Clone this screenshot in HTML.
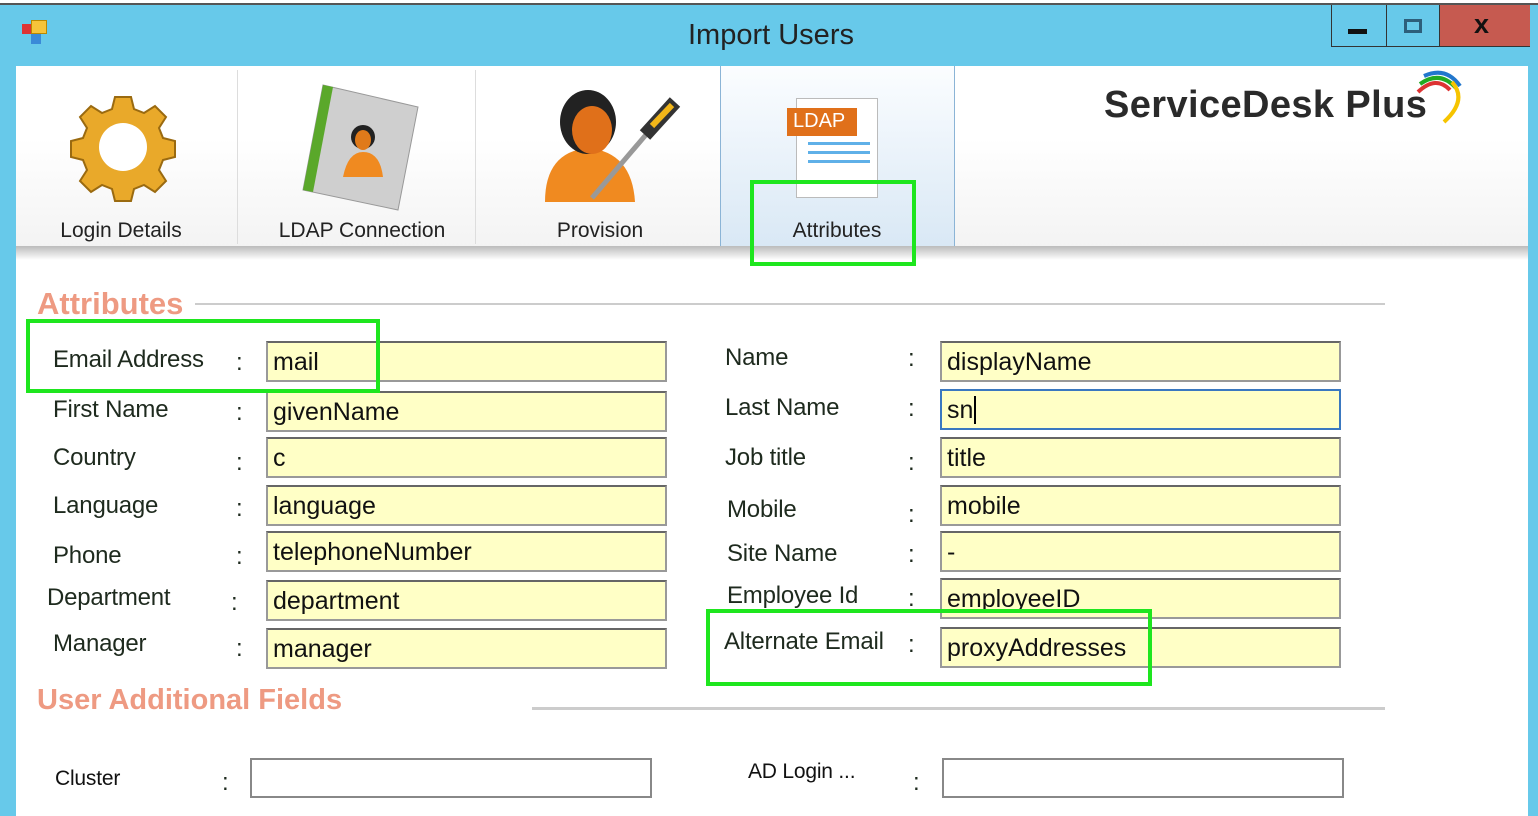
<!DOCTYPE html>
<html><head><meta charset="utf-8"><style>
*{margin:0;padding:0;box-sizing:border-box}
body{width:1538px;height:816px;overflow:hidden;background:#67c9ea;font-family:"Liberation Sans",sans-serif;position:relative}
.a{position:absolute}
.top{left:0;top:0;width:1538px;height:5px;background:#fff;border-bottom:2px solid #555}
.title{left:0;top:5px;width:1538px;height:60px;background:#67c9ea}
.tb{left:16px;top:66px;width:1512px;height:182px;background:linear-gradient(#fff,#fff 40%,#f3f3f3)}
.sep{top:70px;width:1px;height:174px;background:#ddd}
.shadow{left:16px;top:246px;width:1512px;height:14px;background:linear-gradient(#bbb,#fff)}
.form{left:16px;top:260px;width:1512px;height:556px;background:#fff}
.lbl{font-size:24px;color:#1e2a1e;letter-spacing:-0.2px}
.inp{width:401px;height:41px;background:#ffffc6;border:2px solid #999;border-top-color:#666;font-size:25px;color:#111;padding:5px 0 0 5px}
.tl{font-size:21px;color:#222;text-align:center;width:240px}
.gb{border:4px solid #1ee61e}
.hd{font-size:31px;font-weight:bold;color:#ee9a82}
</style></head><body>
<div class="a top"></div>
<div class="a title"></div>
<div class="a" style="left:22px;top:24px;width:10px;height:10px;background:#d33"></div>
<div class="a" style="left:31px;top:20px;width:16px;height:14px;background:#f6c43a;border:1px solid #b80"></div>
<div class="a" style="left:31px;top:34px;width:10px;height:10px;background:#3a8ad8"></div>
<div class="a" style="left:688px;top:19px;font-size:29px;color:#222">Import Users</div>
<div class="a" style="left:1331px;top:5px;width:56px;height:42px;border:1px solid #333;border-top:none;border-right:none"></div>
<div class="a" style="left:1348px;top:29px;width:19px;height:5px;background:#111"></div>
<div class="a" style="left:1386px;top:5px;width:54px;height:42px;border:1px solid #333;border-top:none"></div>
<div class="a" style="left:1404px;top:19px;width:18px;height:14px;border:3px solid #2d5e7a"></div>
<div class="a" style="left:1440px;top:5px;width:90px;height:42px;background:#c65a50;border-bottom:1px solid #333"></div>
<div class="a" style="left:1474px;top:9px;font-size:27px;font-weight:bold;color:#111">x</div>
<div class="a tb"></div>
<div class="a" style="left:720px;top:66px;width:235px;height:180px;background:linear-gradient(#fbfdff,#d9e8f5);border-left:1px solid #8bb4d6;border-right:1px solid #8bb4d6"></div>
<div class="a sep" style="left:237px"></div>
<div class="a sep" style="left:475px"></div>
<svg class="a" style="left:68px;top:92px" width="110" height="110" viewBox="0 0 110 110">
<g transform="translate(55,55)"><g fill="#e9a92a" stroke="#9a6a10" stroke-width="2">
<path d="M-8,-50h16l3,12 10,4 11,-7 11,11 -7,11 4,10 12,3v16l-12,3 -4,10 7,11 -11,11 -11,-7 -10,4 -3,12h-16l-3,-12 -10,-4 -11,7 -11,-11 7,-11 -4,-10 -12,-3v-16l12,-3 4,-10 -7,-11 11,-11 11,7 10,-4z"/></g>
<circle r="24" fill="#fff"/></g></svg>
<svg class="a" style="left:298px;top:82px" width="125" height="130" viewBox="0 0 125 130">
<path d="M25,3 L120,25 L100,128 L5,108Z" fill="#cfcfcf" stroke="#999"/>
<path d="M25,3 L35,5 L15,110 L5,108Z" fill="#5aa82a"/>
<circle cx="65" cy="55" r="12" fill="#222"/><ellipse cx="65" cy="58" rx="8" ry="10" fill="#e07a1a"/>
<path d="M45,95 Q50,70 65,70 Q82,70 85,95Z" fill="#f08a20"/></svg>
<svg class="a" style="left:540px;top:90px" width="145" height="115" viewBox="0 0 145 115">
<path d="M5,112 Q5,62 48,58 Q92,62 95,112Z" fill="#f08a20"/>
<ellipse cx="48" cy="32" rx="28" ry="32" fill="#222"/><ellipse cx="52" cy="40" rx="20" ry="24" fill="#e0701a"/>
<path d="M52,108 L110,40" stroke="#999" stroke-width="5"/><path d="M105,45 L135,12" stroke="#333" stroke-width="14"/><path d="M112,36 L132,15" stroke="#f2b619" stroke-width="6"/></svg>
<div class="a" style="left:796px;top:98px;width:82px;height:100px;background:#fff;border:1px solid #bbb"></div>
<div class="a" style="left:787px;top:108px;width:70px;height:28px;background:#e0701a;color:#fff;font-size:20px;padding:2px 0 0 6px">LDAP</div>
<div class="a" style="left:808px;top:142px;width:62px;height:26px;background:repeating-linear-gradient(#5fb0e8 0 3px,transparent 3px 9px)"></div>
<div class="a tl" style="left:1px;top:219px">Login Details</div>
<div class="a tl" style="left:242px;top:219px">LDAP Connection</div>
<div class="a tl" style="left:480px;top:219px">Provision</div>
<div class="a tl" style="left:717px;top:219px">Attributes</div>
<div class="a" style="left:1104px;top:84px;font-size:38px;color:#2a2a2a;font-weight:bold;letter-spacing:0.4px">ServiceDesk Plus</div>
<svg class="a" style="left:1408px;top:70px" width="60" height="56" viewBox="0 0 60 56"><g fill="none" stroke-width="4"><path d="M10,22 Q28,5 42,20" stroke="#d33"/><path d="M12,14 Q32,0 48,18" stroke="#2a2"/><path d="M16,6 Q38,-4 52,16" stroke="#27c"/><path d="M44,12 Q60,30 36,52" stroke="#f6c400"/></g></svg>
<div class="a shadow"></div>
<div class="a form"></div>
<div class="a gb" style="left:750px;top:180px;width:166px;height:86px"></div>
<div class="a hd" style="left:37px;top:286px">Attributes</div>
<div class="a" style="left:195px;top:303px;width:1190px;height:2px;background:#ccc"></div>
<div class="a hd" style="left:37px;top:684px;font-size:29px">User Additional Fields</div>
<div class="a" style="left:532px;top:707px;width:853px;height:3px;background:#ccc"></div>

<div class="a lbl" style="left:53px;top:346px">Email Address</div>
<div class="a lbl" style="left:53px;top:396px">First Name</div>
<div class="a lbl" style="left:53px;top:444px">Country</div>
<div class="a lbl" style="left:53px;top:492px">Language</div>
<div class="a lbl" style="left:53px;top:542px">Phone</div>
<div class="a lbl" style="left:47px;top:584px">Department</div>
<div class="a lbl" style="left:53px;top:630px">Manager</div>
<div class="a lbl" style="left:236px;top:349px">:</div><div class="a lbl" style="left:236px;top:399px">:</div><div class="a lbl" style="left:236px;top:449px">:</div><div class="a lbl" style="left:236px;top:495px">:</div><div class="a lbl" style="left:236px;top:543px">:</div><div class="a lbl" style="left:231px;top:589px">:</div><div class="a lbl" style="left:236px;top:635px">:</div>
<div class="a inp" style="left:266px;top:341px">mail</div>
<div class="a inp" style="left:266px;top:391px">givenName</div>
<div class="a inp" style="left:266px;top:437px">c</div>
<div class="a inp" style="left:266px;top:485px">language</div>
<div class="a inp" style="left:266px;top:531px">telephoneNumber</div>
<div class="a inp" style="left:266px;top:580px">department</div>
<div class="a inp" style="left:266px;top:628px">manager</div>

<div class="a lbl" style="left:725px;top:344px">Name</div>
<div class="a lbl" style="left:725px;top:394px">Last Name</div>
<div class="a lbl" style="left:725px;top:444px">Job title</div>
<div class="a lbl" style="left:727px;top:496px">Mobile</div>
<div class="a lbl" style="left:727px;top:540px">Site Name</div>
<div class="a lbl" style="left:727px;top:582px">Employee Id</div>
<div class="a lbl" style="left:724px;top:628px">Alternate Email</div>
<div class="a lbl" style="left:908px;top:345px">:</div><div class="a lbl" style="left:908px;top:395px">:</div><div class="a lbl" style="left:908px;top:449px">:</div><div class="a lbl" style="left:908px;top:501px">:</div><div class="a lbl" style="left:908px;top:541px">:</div><div class="a lbl" style="left:908px;top:585px">:</div><div class="a lbl" style="left:908px;top:631px">:</div>
<div class="a inp" style="left:940px;top:341px">displayName</div>
<div class="a inp" style="left:940px;top:389px;border-color:#3a78c0">sn<span style="border-left:2px solid #000;margin-left:1px"></span></div>
<div class="a inp" style="left:940px;top:437px">title</div>
<div class="a inp" style="left:940px;top:485px">mobile</div>
<div class="a inp" style="left:940px;top:531px">-</div>
<div class="a inp" style="left:940px;top:578px">employeeID</div>
<div class="a inp" style="left:940px;top:627px">proxyAddresses</div>

<div class="a lbl" style="left:55px;top:767px;font-size:21px;color:#111">Cluster</div>
<div class="a lbl" style="left:222px;top:769px">:</div>
<div class="a" style="left:250px;top:758px;width:402px;height:40px;background:#fff;border:2px solid #888"></div>
<div class="a lbl" style="left:748px;top:760px;font-size:21px;color:#111">AD Login ...</div>
<div class="a lbl" style="left:913px;top:769px">:</div>
<div class="a" style="left:942px;top:758px;width:402px;height:40px;background:#fff;border:2px solid #888"></div>

<div class="a gb" style="left:26px;top:319px;width:354px;height:74px"></div>
<div class="a gb" style="left:706px;top:609px;width:446px;height:77px"></div>
</body></html>
